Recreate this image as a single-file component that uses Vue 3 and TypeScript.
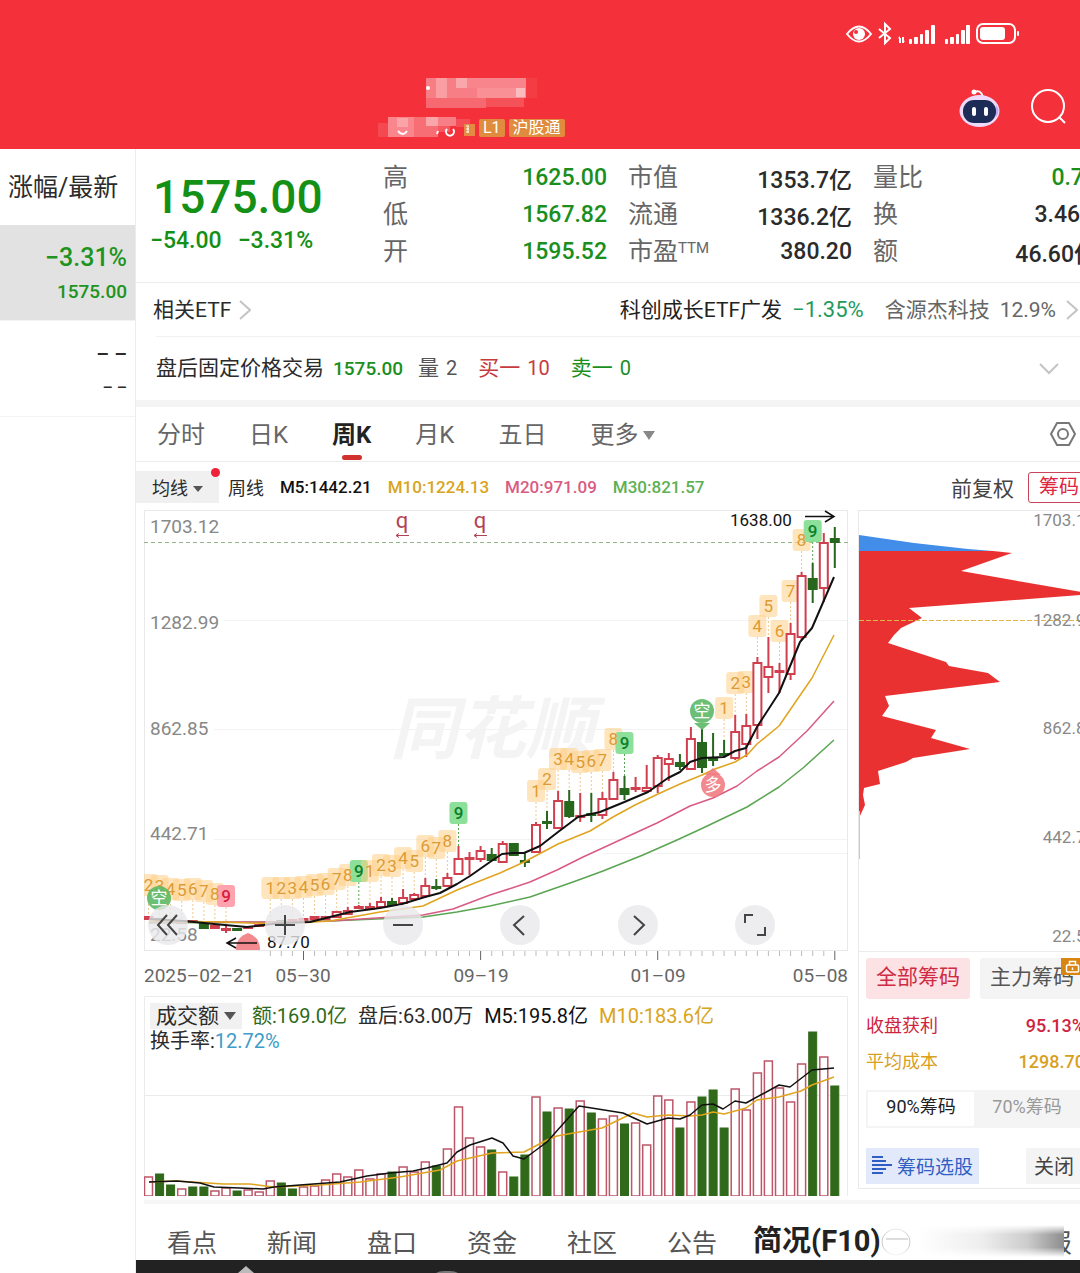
<script setup lang="ts">
type Candle = [up: 0 | 1, high: number, top: number, bottom: number, low: number]
type Tag = { i: number; y: number; text: string; kind: 'o' | 'g' | 'r' }

const step = 11.07
const cx = (i: number): number => Math.round((4.5 + step * i) * 10) / 10

const quotes = [
  [
    { label: '高', value: '1625.00', tone: 'green' },
    { label: '低', value: '1567.82', tone: 'green' },
    { label: '开', value: '1595.52', tone: 'green' },
  ],
  [
    { label: '市值', value: '1353.7亿', tone: '' },
    { label: '流通', value: '1336.2亿', tone: '' },
    { label: '市盈', sup: 'TTM', value: '380.20', tone: '' },
  ],
  [
    { label: '量比', value: '0.78', tone: 'green' },
    { label: '换', value: '3.46%', tone: '' },
    { label: '额', value: '46.60亿', tone: '' },
  ],
]

const periods = ['分时', '日K', '周K', '月K', '五日']
const sections = ['看点', '新闻', '盘口', '资金', '社区', '公告']

// Candles: vertical positions inside the 704 x 480 price plot
const candles: Candle[] = [
  [1, 407, 407, 409, 409], [0, 408, 409, 411, 411], [0, 409, 410, 412, 413], [1, 410, 411, 413, 414],
  [1, 410, 411, 412, 413], [0, 413, 413, 418, 418], [1, 416, 416, 418, 418], [1, 416, 419, 420, 423],
  [0, 418, 419, 420, 420], [1, 417, 417, 418, 418], [1, 414, 415, 416, 417], [1, 411, 412, 414, 415],
  [0, 410, 411, 413, 414], [1, 409, 410, 412, 413], [1, 408, 409, 411, 412], [1, 407, 407, 409, 409],
  [1, 407, 407, 409, 409], [1, 402, 402, 407, 407], [1, 397, 401, 404, 405], [1, 395, 397, 398, 399],
  [1, 393, 397, 399, 400], [1, 387, 392, 397, 397], [0, 388, 392, 395, 396], [1, 379, 388, 393, 394],
  [1, 383, 385, 389, 390], [1, 368, 376, 386, 388], [0, 369, 377, 378, 380], [1, 363, 368, 376, 377],
  [1, 336, 349, 364, 364], [1, 342, 348, 349, 365], [1, 336, 341, 349, 352], [0, 338, 345, 350, 350],
  [1, 331, 334, 352, 352], [0, 334, 334, 345, 345], [0, 343, 351, 352, 357], [1, 312, 315, 342, 342],
  [0, 301, 312, 313, 319], [1, 281, 291, 318, 318], [0, 280, 292, 306, 308], [1, 283, 306, 307, 312],
  [0, 283, 304, 305, 312], [1, 282, 289, 305, 309], [1, 262, 270, 289, 289], [0, 266, 279, 284, 290],
  [1, 267, 278, 279, 282], [1, 255, 278, 281, 281], [1, 245, 248, 276, 283], [1, 243, 249, 254, 271],
  [0, 244, 253, 256, 260], [1, 217, 229, 259, 259], [0, 219, 233, 257, 263], [0, 223, 249, 250, 256],
  [0, 230, 244, 245, 248], [1, 205, 222, 248, 250], [1, 204, 216, 234, 247], [1, 147, 153, 215, 229],
  [1, 127, 157, 167, 183], [1, 153, 161, 162, 183], [1, 113, 124, 164, 170], [1, 62, 66, 127, 130],
  [0, 53, 69, 79, 93], [1, 23, 33, 78, 92], [0, 17, 29, 32, 58],
]

// Turnover bar heights; rising weeks are negative and drawn hollow
const volumes = [
  -19, 22, 11, -7, 9, 9, -5, -8, 5, -6, -4, -15, 13, 7, -9, -10, -16, -22, -19, -26, -17, -22, 24, -29, -24,
  -34, 30, -47, -89, -58, -49, 46, -24, 19, 41, -99, 84, -88, 87, -95, 83, -77, -80, 72, -73, -51, -100, -96,
  68, -94, 99, 106, 68, -107, -86, -123, -135, -108, -94, -132, 164, -139, 110,
]

const series = (start: number, text: string, ys: number[], lastKind: 'o' | 'g' | 'r' = 'o'): Tag[] =>
  ys.map((y, n) => ({ i: start + n, y, text: text[n], kind: n === ys.length - 1 ? lastKind : 'o' }))

const tags: Tag[] = [
  ...series(0, '23456789', [375, 376, 379, 380, 379, 381, 384, 386], 'r'),
  ...series(11, '123456789', [378, 378, 378, 377, 375, 374, 369, 365, 361], 'g'),
  ...series(20, '123456789', [361, 355, 356, 348, 351, 336, 338, 331, 303], 'g'),
  ...series(35, '123456789', [281, 269, 249, 249, 252, 251, 250, 229, 233], 'g'),
  ...series(52, '123456789', [198, 173, 172, 116, 96, 121, 81, 30, 21], 'g'),
]

const labels = [
  { t: '1703.12', y: 16 }, { t: '1282.99', y: 112 }, { t: '862.85', y: 218 }, { t: '442.71', y: 323 }, { t: '22.58', y: 424 },
]
const chipLabels = [
  { t: '1703.12', y: 9 }, { t: '1282.99', y: 109 }, { t: '862.85', y: 217 }, { t: '442.71', y: 326 }, { t: '22.58', y: 425 },
]
const dates = [
  { t: '05–30', i: 14, anchor: 'middle', x: 159 },
  { t: '09–19', i: 30, anchor: 'middle', x: 337 },
  { t: '01–09', i: 46, anchor: 'middle', x: 514 },
  { t: '05–08', i: 62, anchor: 'end', x: 704 },
]
const ticks = Array.from({ length: 52 }, (_, n) => n + 11)
const isMajor = (i: number): boolean => dates.some((d) => d.i === i)

const tools = [
  { name: '更早', d: 'M19 10 L10 20 L19 30 M29 10 L20 20 L29 30' },
  { name: '放大', d: 'M20 10 V30 M10 20 H30' },
  { name: '缩小', d: 'M10 20 H30' },
  { name: '左移', d: 'M24 11 L14 20 L24 30' },
  { name: '右移', d: 'M16 11 L26 20 L16 30' },
  { name: '全屏', d: 'M10 18 V10 H18 M30 22 V30 H22' },
]

// Masked stock name and code: [x, y, w, h, opacity]
const nameBlocks = [
  [0, 0, 100, 20, 0.38], [10, 0, 11, 20, 0.25], [30, 0, 11, 10, 0.32], [41, 0, 59, 10, 0.06], [51, 10, 49, 10, 0.14],
  [90, 10, 9, 9, 0.4], [0, 20, 60, 10, 0.28], [60, 20, 38, 9, 0.16], [100, 0, 11, 20, 0.06],
]
const codeBlocks = [
  [0, 6, 10, 14, 0.12], [10, 0, 26, 20, 0.42], [19, 1, 11, 9, 0.25], [36, 0, 24, 20, 0.3], [48, 0, 30, 9, 0.38], [60, 9, 12, 6, 0.2], [78, 2, 14, 8, 0.14],
]
</script>

<template>
  <div class="app">
    <header class="top">
      <div class="status">
        <svg width="176" height="26" viewBox="0 0 176 26" aria-hidden="true">
          <g fill="none" stroke="#fff" stroke-width="2">
            <path d="M2 13 Q14 -2 26 13 Q14 28 2 13Z" />
            <path d="M34 8 L45 17 L40 22 V3 L45 8 L34 17" stroke-width="2" />
            <rect x="132" y="3" width="38" height="19" rx="6" />
          </g>
          <circle cx="14" cy="13" r="6" fill="#fff" />
          <circle cx="11" cy="11" r="2" fill="#f4303a" />
          <g fill="#fff">
            <path d="M54 17h2v5h-2zM57 16h2v6h-2zM53 17l2-2v3zM60 20l-2 2v-3z" />
            <rect x="64" y="18" width="3" height="5" rx="1" /><rect x="69" y="16" width="4" height="7" rx="1" />
            <rect x="75" y="13" width="3" height="10" rx="1" /><rect x="80" y="9" width="4" height="14" rx="1" />
            <rect x="86" y="4" width="4" height="19" rx="1" />
            <rect x="100" y="18" width="3" height="5" rx="1" /><rect x="105" y="16" width="4" height="7" rx="1" />
            <rect x="111" y="13" width="3" height="10" rx="1" /><rect x="116" y="9" width="4" height="14" rx="1" />
            <rect x="121" y="4" width="4" height="19" rx="1" />
            <rect x="135" y="6" width="25" height="13" rx="3" /><rect x="172" y="10" width="2" height="5" rx="1" />
          </g>
        </svg>
      </div>
      <div class="title-row">
        <div class="stock">
          <svg class="name" width="112" height="30" viewBox="0 0 112 30" aria-hidden="true">
            <rect v-for="(b, n) in nameBlocks" :key="n" :x="b[0]" :y="b[1]" :width="b[2]" :height="b[3]" :opacity="b[4]" fill="#fff" />
            <circle cx="2" cy="10" r="2" fill="#fff" />
          </svg>
          <div class="code">
            <svg width="97" height="22" viewBox="0 0 97 22" aria-hidden="true">
              <rect v-for="(b, n) in codeBlocks" :key="n" :x="b[0]" :y="b[1]" :width="b[2]" :height="b[3]" :opacity="b[4]" fill="#fff" />
              <path d="M20 14 q5 6 9 0 M60 14 l-1 3 M69 12 a4 4 0 1 0 6 0" fill="none" stroke="#fff" stroke-width="2" />
              <rect x="86" y="7" width="11" height="12" fill="#e58a42" />
              <path d="M88 9h3M88 12h3M88 15h3M90 9v7" stroke="#fff" stroke-width="1" />
            </svg>
            <span class="badge">L1</span>
            <span class="badge">沪股通</span>
          </div>
        </div>
        <div class="actions">
          <button type="button" aria-label="智能助手">
            <svg width="42" height="42" viewBox="0 0 42 42">
              <path d="M15 4 q7 -3 9 5" fill="none" stroke="#fff" stroke-width="2" />
              <circle cx="15" cy="4" r="2.500" fill="#fff" />
              <ellipse cx="20.500" cy="23" rx="20" ry="16" fill="#efd9fa" />
              <path d="M37 17 q5 6 0 12z" fill="#c4a8ee" />
              <rect x="4" y="12" width="33" height="23" rx="11" fill="#1d2b57" />
              <rect x="13" y="19" width="4" height="9" rx="2" fill="#fff" /><rect x="25" y="19" width="4" height="9" rx="2" fill="#fff" />
            </svg>
          </button>
          <button type="button" aria-label="搜索">
            <svg width="38" height="38" viewBox="0 0 38 38" fill="none" stroke="#fff" stroke-width="2">
              <circle cx="18" cy="18" r="16" /><path d="M29 29 L35 35" />
            </svg>
          </button>
        </div>
      </div>
    </header>

    <div class="body">
      <aside class="side">
        <div class="side-head">涨幅/最新</div>
        <div class="side-item selected"><b>−3.31%</b><span>1575.00</span></div>
        <div class="side-item empty"><b>– –</b><span>– –</span></div>
      </aside>

      <main class="main">
        <section class="quote">
          <div class="price">
            <strong>1575.00</strong>
            <p><span>−54.00</span><span>−3.31%</span></p>
          </div>
          <div class="stats">
            <dl v-for="(col, n) in quotes" :key="n">
              <div v-for="q in col" :key="q.label">
                <dt>{{ q.label }}<sup v-if="'sup' in q">{{ q.sup }}</sup></dt>
                <dd :class="q.tone">{{ q.value }}</dd>
              </div>
            </dl>
          </div>
        </section>

        <section class="etf">
          <a href="#etf">相关ETF
            <svg width="12" height="20" viewBox="0 0 12 20"><path d="M1 1 L11 10 L1 19" /></svg>
          </a>
          <a href="#fund" class="fund">
            <b>科创成长ETF广发</b><i>−1.35%</i><span class="hold">含源杰科技</span><span>12.9%</span>
            <svg width="12" height="20" viewBox="0 0 12 20"><path d="M1 1 L11 10 L1 19" /></svg>
          </a>
        </section>

        <section class="after">
          <span>盘后固定价格交易</span><b class="green">1575.00</b>
          <span class="pair grey">量 <b>2</b></span>
          <span class="pair red">买一 <b>10</b></span>
          <span class="pair green">卖一 <b>0</b></span>
          <button type="button" aria-label="展开"><svg width="20" height="12" viewBox="0 0 20 12"><path d="M1 1 L10 10 L19 1" /></svg></button>
        </section>

        <nav class="periods">
          <button v-for="p in periods" :key="p" type="button" :class="{ on: p === '周K' }">{{ p }}</button>
          <button type="button">更多<i class="caret"></i></button>
          <button type="button" class="gear" aria-label="设置">
            <svg width="28" height="26" viewBox="0 0 28 26" fill="none" stroke="#777" stroke-width="2">
              <path d="M8 2 H20 L26 13 L20 24 H8 L2 13Z" stroke-linejoin="round" /><circle cx="14" cy="13" r="5" />
            </svg>
          </button>
        </nav>

        <div class="legend">
          <button type="button" class="ma">均线<i class="caret"></i></button>
          <span class="week">周线</span>
          <span class="m5">M5:1442.21</span><span class="m10">M10:1224.13</span>
          <span class="m20">M20:971.09</span><span class="m30">M30:821.57</span>
          <button type="button" class="adjust">前复权</button>
          <button type="button" class="chip-btn">筹码</button>
        </div>

        <div class="charts">
          <div class="left">
            <div class="price-chart">
              <svg class="plot" viewBox="0 0 704 480">
                <text class="mark" x="246" y="243">同花顺</text>
                <g stroke="#f3f3f3">
                  <path d="M80 110.500 H704 M70 219.500 H704 M70 329.500 H704 M460 343.500 H704" />
                </g>
                <path d="M.5 440 V.5 H703.500 V440" fill="none" stroke="#e9e9e9" />
                <path d="M0 440.500 H704" stroke="#e9e9e9" />
                <path d="M0 32.500 H704" stroke="#94b48c" stroke-dasharray="4 3" />
                <text v-for="l in labels" :key="l.t" class="axis" x="6" :y="l.y + 7">{{ l.t }}</text>

                <g v-for="(t, n) in tags" :key="'s' + n">
                  <path :d="`M${cx(t.i)} ${t.y + 11} V${candles[t.i][1]}`" :class="['stem', t.kind]" />
                  <rect :x="cx(t.i) - 9" :y="t.y - 11" width="18" height="22" rx="3" :class="['tag', t.kind]" />
                </g>
                <text v-for="(t, n) in tags" :key="'t' + n" :x="cx(t.i)" :y="t.y + 6" :class="['digit', t.kind]">{{ t.text }}</text>

                <g v-for="(c, i) in candles" :key="'c' + i" :class="c[0] ? 'up' : 'down'">
                  <path :d="`M${cx(i)} ${c[1]} V${c[2]} M${cx(i)} ${c[3]} V${c[4]}`" />
                  <rect :x="cx(i) - 4" :y="c[2]" width="8" :height="c[3] - c[2]" />
                </g>

                <g class="lines">
                  <path stroke="#5aa552" d="M5 413 L136 412 L186 411 L279 407 L313 402 L346 396 L386 387 L429 372 L459 361 L499 345 L533 330 L559 318 L603 297 L635 277 L659 258 L690 230" />
                  <path stroke="#d95b83" d="M5 412 L136 412 L186 411 L279 405 L309 399 L346 385 L368 378 L386 372 L413 360 L439 347 L463 336 L489 324 L513 313 L546 296 L569 288 L593 276 L613 261 L635 247 L663 221 L690 191" />
                  <path stroke="#e0a41e" d="M5 411 L80 412 L136 414 L186 411 L236 402 L279 396 L313 380 L356 363 L380 352 L414 334 L446 321 L469 307 L491 295 L514 284 L536 274 L558 265 L571 259 L591 252 L604 244 L613 234 L635 216 L668 168 L690 125" />
                  <path stroke="#111" class="thick" d="M5 409 L40 411 L70 414 L103 417 L136 413 L166 412 L186 407 L206 402 L236 398 L258 394 L281 387 L296 383 L313 374 L326 366 L346 352 L358 344 L369 343 L380 343 L396 336 L414 322 L434 307 L456 302 L478 293 L504 282 L524 268 L536 262 L546 252 L558 248 L580 247 L591 241 L602 238 L613 217 L635 183 L656 132 L668 118 L690 67" />
                </g>

                <g class="pin green-pin">
                  <path d="M550 213 l8 7 l8 -7z" /><circle cx="558" cy="201" r="12" /><text x="558" y="207">空</text>
                  <circle cx="15" cy="388" r="12" /><text x="15" y="394">空</text>
                </g>
                <g class="pin red-pin">
                  <path d="M561 265 l8 -7 l8 7z" /><circle cx="569" cy="275" r="12" /><text x="569" y="281">多</text>
                  <path d="M92 440 Q92 427 104 423 Q116 427 116 440Z" />
                </g>

                <g v-for="x in [258, 336]" :key="x">
                  <text class="q" :x="x" y="18">q</text>
                  <path :d="`M${x + 7} 25.500 H${x - 6} m3 -2 l-3 2 l3 2`" fill="none" stroke="#b24256" />
                </g>
                <text class="peak" x="586" y="16">1638.00</text>
                <path d="M661 6.500 H690 M681 1 L690 6.500 L681 12" fill="none" stroke="#111" stroke-width="1.500" />
                <text class="peak" x="123" y="438">87.70</text>
                <path d="M113 433 H83 M92 428 L83 433 L92 438" fill="none" stroke="#111" stroke-width="1.500" />

                <path v-for="i in ticks" :key="'k' + i" :d="`M${cx(i)} 441 v${isMajor(i) ? 9 : 5}`" :stroke="isMajor(i) ? '#666' : '#bbb'" />
                <text class="date" x="0" y="472">2025–02–21</text>
                <text v-for="d in dates" :key="d.t" class="date" :x="d.x" y="472" :text-anchor="d.anchor">{{ d.t }}</text>
              </svg>
              <div class="tools">
                <button v-for="t in tools" :key="t.name" type="button" :aria-label="t.name">
                  <svg width="40" height="40" viewBox="0 0 40 40"><path :d="t.d" /></svg>
                </button>
              </div>
            </div>

            <div class="volume">
              <svg class="plot" viewBox="0 0 704 200">
                <path d="M.5 200 V.5 H703.500 V200 M0 99.500 H704" fill="none" stroke="#ebebeb" />
                <g v-for="(v, i) in volumes" :key="i" :class="v < 0 ? 'vol-up' : 'vol-down'">
                  <rect :x="cx(i) - 4" :y="200 - Math.abs(v)" width="8" :height="Math.abs(v)" />
                </g>
                <g class="lines">
                  <path stroke="#e0a41e" d="M5 186 L33 185 L79 188 L106 188 L129 191 L176 189 L216 186 L256 181 L296 174 L313 165 L348 157 L380 156 L403 144 L413 140 L435 136 L458 132 L489 117 L503 121 L524 119 L546 120 L558 119 L569 116 L580 118 L602 112 L613 104 L635 101 L657 95 L668 89 L690 81" />
                  <path stroke="#111" d="M5 186 L33 185 L56 187 L70 191 L96 192 L119 193 L130 191 L156 189 L196 186 L223 180 L246 177 L269 175 L283 172 L303 167 L313 156 L326 149 L348 142 L359 147 L369 160 L380 163 L403 146 L435 110 L479 117 L503 128 L524 122 L536 123 L546 119 L558 109 L569 108 L579 113 L591 105 L602 107 L635 89 L646 91 L668 74 L690 72" />
                </g>
              </svg>
              <div class="vol-head">
                <div class="vol-line">
                  <button type="button">成交额<i class="caret"></i></button>
                  <span class="amount">额:169.0亿</span><span>盘后:63.00万</span>
                  <span class="m5">M5:195.8亿</span><span class="m10">M10:183.6亿</span>
                </div>
                <div class="turnover">换手率:<span>12.72%</span></div>
              </div>
            </div>
          </div>

          <aside class="chips">
            <svg class="chip-plot" viewBox="0 0 222 440" width="222" height="440">
              <path d="M0 24 L55 32 L109 38 L134 40 V41 H0Z" fill="#428de8" />
              <path d="M0 40 H134 L153 42 L102 60 L142 67 L222 81 V84 L50 97 L63 107 L42 117 L35 124 L29 132 L87 151 L90 155 L129 162 L141 171 L26 185 L30 195 L23 205 L77 219 L72 227 L111 238 L54 247 L47 251 L19 260 L21 273 L5 277 L4 284 L6 294 L0 307Z" fill="#e93131" />
              <path d="M.5 300 V348" stroke="#f2b5b5" />
              <path d="M0 109.500 H222" stroke="#dfb54c" stroke-dasharray="5 2" />
              <text v-for="l in chipLabels" :key="l.t" x="236" :y="l.y + 6">{{ l.t }}</text>
            </svg>
            <div class="chip-panel">
              <div class="kinds">
                <button type="button" class="all">全部筹码</button>
                <button type="button" class="major">主力筹码
                  <svg class="lock" width="20" height="17" viewBox="0 0 20 17"><rect width="20" height="17" fill="#d98511" /><g fill="none" stroke="#fff" stroke-width="1.500"><rect x="5.500" y="7" width="12" height="7" rx="1" /><path d="M8.500 7 V3.500 H14.500 V7 M11.500 9.500 V12" /></g></svg>
                </button>
              </div>
              <p class="row profit"><span>收盘获利</span><b>95.13%</b></p>
              <p class="row cost"><span>平均成本</span><b>1298.70</b></p>
              <div class="seg">
                <button type="button" class="on">90%筹码</button><button type="button">70%筹码</button>
              </div>
              <div class="foot">
                <button type="button" class="pick">
                  <svg width="20" height="20" viewBox="0 0 20 20" stroke="#2f5fc4" stroke-width="2"><path d="M0 2 H11 M0 6 H14 M0 10 H20 M0 14 H14 M0 18 H11" /></svg>筹码选股
                </button>
                <button type="button" class="close">关闭</button>
              </div>
            </div>
          </aside>
        </div>

        <nav class="sections">
          <a v-for="s in sections" :key="s" href="#section">{{ s }}</a>
          <a href="#f10" class="current">简况(F10)</a>
          <span class="haze"><svg width="34" height="32" viewBox="0 0 34 32"><ellipse cx="15" cy="17" rx="14" ry="13" fill="#fff" stroke="#ccc" /><path d="M5 14 H27" stroke="#ddd" stroke-width="2" /></svg></span>
          <a href="#report" class="report">报</a>
        </nav>
        <div class="dock">
          <svg width="340" height="13" viewBox="0 0 340 13"><path d="M102 13 L110 6 L118 13Z" fill="#bbb" /><path d="M300 13 q3 -2 8 -2 h6 q5 0 8 2z" fill="#777" /></svg>
        </div>
      </main>
    </div>
  </div>
</template>

<style>
body { background: #fff; overflow-x: hidden; }
</style>

<style scoped>
.app { font-family: Roboto, "Noto Sans CJK SC", sans-serif; color: #2b2b2b; overflow: hidden; }
.app * { box-sizing: border-box; }
button { font: inherit; color: inherit; border: 0; background: none; padding: 0; white-space: nowrap; }
a { color: inherit; text-decoration: none; }
p, dl, dd { margin: 0; }
b, i { font-weight: 500; font-style: normal; }
svg { display: block; }

.top { background: #f4303a; height: 149px; }
.status { display: flex; justify-content: flex-end; padding: 21px 59px 0 0; }
.title-row { display: flex; justify-content: space-between; margin-top: 31px; }
.stock { margin-left: 35%; }
.name { margin-left: 48px; }
.code { display: flex; gap: 4px; align-items: center; margin-top: 9px; height: 22px; }
.badge { background: #e08c3e; color: #fff; font-size: 16px; line-height: 18px; padding: 0 4px; border-radius: 2px; }
.actions { display: flex; gap: 29px; padding: 10px 12px 0 0; align-items: flex-start; }

.body { display: flex; align-items: stretch; }
.side { flex: 0 0 136px; border-right: 1px solid #ececec; }
.side-head { height: 76px; padding: 21px 0 0 8px; font-size: 25px; line-height: 36px; white-space: nowrap; }
.side-item { height: 96px; padding: 15px 8px 0 0; display: flex; flex-direction: column; align-items: flex-end; border-bottom: 1px solid #f3f3f3; }
.side-item b { font-size: 25px; line-height: 36px; }
.side-item span { font-size: 19px; line-height: 32px; font-weight: 500; }
.side-item.empty b { font-size: 20px; }
.side-item.empty span { font-size: 16px; }
.selected { background: #e2e2e2; color: #1e9420; }

.main { flex: 1; min-width: 0; }
.green { color: #1a8f1e; }
.red { color: #c63a40; }
.grey { color: #555; }

.quote { display: flex; height: 134px; border-bottom: 1px solid #ececec; }
.price { flex: 0 0 247px; padding: 18px 0 0 17px; color: #149016; }
.price strong { display: block; font-size: 46px; line-height: 60px; font-weight: 500; }
.price p { display: flex; gap: 16px; margin-left: -3px; font-size: 23px; line-height: 28px; font-weight: 500; }
.stats { flex: 1; display: grid; grid-template-columns: repeat(3, 1fr); gap: 21px; margin-right: -17px; padding-top: 10px; }
.stats div { display: flex; justify-content: space-between; align-items: center; height: 37px; }
dt { font-size: 25px; color: #666; white-space: nowrap; padding-bottom: 6px; }
sup { font-size: 15px; line-height: 15px; vertical-align: 7px; }
dd { font-size: 23px; font-weight: 500; white-space: nowrap; }

.etf { display: flex; justify-content: space-between; align-items: center; height: 53px; padding: 0 2px 0 17px; font-size: 21px; line-height: 30px; }
.etf a { display: flex; align-items: baseline; gap: 8px; white-space: nowrap; }
.etf a svg { align-self: center; }
.etf path, .after path { fill: none; stroke: #c4c4c4; stroke-width: 2; }
.fund b, .fund i, .fund span { font-weight: 400; }
.etf .fund { gap: 10px; color: #666; }
.fund b { color: #222; }
.fund i { color: #239a5b; font-size: 22px; }
.hold { margin-left: 11px; }
.after { display: flex; align-items: baseline; gap: 9px; height: 64px; margin-left: 20px; padding: 16px 21px 0 0; font-size: 21px; line-height: 30px; border-top: 1px solid #f1f1f1; }
.after b { font-size: 20px; font-weight: 400; }
.after b.green { font-weight: 500; font-size: 19px; }
.pair { margin-left: 6px; display: flex; gap: 7px; align-items: baseline; }
.pair.red, .pair.green { margin-left: 12px; }
.after button { margin-left: auto; }

.periods { display: flex; align-items: center; gap: 44px; height: 62px; padding: 0 3px 4px 21px; border-top: 7px solid #f4f4f4; border-bottom: 1px solid #ececec; font-size: 24px; color: #666; }
.periods button { position: relative; }
.periods .on { color: #222; font-weight: 700; }
.periods .on::after { content: ""; position: absolute; left: 50%; bottom: -10px; width: 20px; height: 5px; margin-left: -10px; border-radius: 3px; background: #d0312d; }
.periods .gear { margin-left: auto; padding-top: 3px; }
.caret { display: inline-block; margin-left: 5px; border: 6px solid transparent; border-top: 9px solid #888; border-bottom: 0; vertical-align: 3px; }

.legend { display: flex; align-items: center; height: 48px; font-size: 17px; padding-top: 2px; }
.ma { position: relative; background: #f0f0f0; height: 32px; width: 83px; font-size: 18px; }
.ma .caret { border-width: 6px 5px 0; border-top-color: #555; }
.ma::after { content: ""; position: absolute; right: -1px; top: -3px; width: 9px; height: 9px; border-radius: 50%; background: #ee2238; }
.week { font-size: 18px; margin-left: 9px; }
.m5 { color: #111; }
.m10 { color: #d9a420; }
.m20 { color: #d95b83; }
.m30 { color: #5db052; }
.legend .m5, .legend .m10, .legend .m20, .legend .m30 { margin-left: 16px; font-weight: 500; }
.adjust { margin-left: auto; font-size: 21px; color: #444; }
.chip-btn { margin: 0 -6px 0 14px; width: 58px; height: 31px; border: 1px solid #c9465a; border-radius: 3px; font-size: 20px; line-height: 26px; color: #dc2740; text-align: left; padding-left: 10px; }

.charts { display: flex; gap: 10px; margin-left: 8px; border-bottom: 4px solid #f6f6f6; padding-bottom: 4px; }
.left { flex: 1; min-width: 0; }
.price-chart { position: relative; }
.plot { width: 100%; height: auto; }
.axis { font-size: 19px; fill: #888; }
.mark { font-size: 68px; font-weight: 700; font-style: italic; fill: #f4f4f4; }
.stem { stroke: #efc98d; stroke-dasharray: 2 2; }
.stem.g { stroke: #5aa552; }
.tag.o { fill: #ffcf87; opacity: 0.55; }
.tag.g { fill: #8de09a; }
.tag.r { fill: #ffa3ae; }
.digit { font-size: 17px; text-anchor: middle; fill: #dc9b34; }
.digit.g { fill: #0b7f2b; font-weight: 500; }
.digit.r { fill: #d1213f; font-weight: 500; }
.up path, .up rect { stroke: #cf3f4d; stroke-width: 2; }
.up rect { fill: #fff; }
.down path, .down rect { stroke: #27661d; stroke-width: 2; }
.down rect { fill: #27661d; }
.vol-up rect { fill: #fff; stroke: #bd5668; stroke-width: 1.5; }
.vol-down rect { fill: #31691a; stroke: #31691a; }
.lines path { fill: none; stroke-width: 1.5; stroke-linejoin: round; }
.lines .thick { stroke-width: 2; }
.pin { font-size: 17px; text-anchor: middle; }
.pin text { fill: #fff; }
.green-pin path, .green-pin circle { fill: #5cb865; opacity: 0.9; }
.red-pin path, .red-pin circle { fill: #f07c82; opacity: 0.9; }
.q { font-size: 22px; text-anchor: middle; fill: #b24256; }
.peak { font-size: 17px; fill: #111; }
.date { font-size: 19px; fill: #666; }
.tools { position: absolute; left: 4px; right: 73px; bottom: 45px; display: flex; justify-content: space-between; }
.tools button { width: 40px; height: 40px; border-radius: 50%; background: rgba(232, 232, 235, 0.8); }
.tools path { fill: none; stroke: #444; stroke-width: 2; }

.volume { display: grid; margin-top: 6px; }
.volume > * { grid-area: 1 / 1; }
.vol-head { padding: 7px 0 0 6px; font-size: 20px; line-height: 24px; white-space: nowrap; }
.vol-line { display: flex; gap: 11px; align-items: center; }
.vol-line button { background: #f1f1f1; width: 92px; height: 26px; font-size: 21px; line-height: 26px; }
.vol-line .caret { border-top-width: 8px; border-top-color: #555; }
.vol-line .amount { margin-left: -1px; color: #2f6a1a; }
.turnover span { color: #3d9cc8; }

.chips { flex: 0 0 222px; min-width: 0; border: 1px solid #e9e9e9; border-right: 0; overflow: hidden; height: 679px; }
.chip-plot { overflow: hidden; }
.chip-plot text { font-size: 17px; fill: #888; text-anchor: end; }
.chip-panel { padding: 6px 0 0 7px; border-top: 1px solid #ececec; margin-right: -8px; }
.kinds { display: flex; gap: 10px; font-size: 21px; line-height: 36px; }
.kinds button { height: 41px; flex: 0 0 104px; border-radius: 3px; padding-bottom: 4px; }
.kinds .all { background: #fde2e5; color: #cf2b44; }
.kinds .major { position: relative; flex: 1; background: #f4f4f4; color: #555; text-align: left; padding-left: 10px; }
.lock { position: absolute; right: 7px; top: 0; }
.row { display: flex; justify-content: space-between; font-size: 18px; line-height: 36px; padding-right: 3px; }
.kinds + .row { margin-top: 9px; }
.profit { color: #d0233f; }
.cost { color: #d9a01d; }
.seg { display: flex; margin-top: 10px; background: #f4f4f4; height: 38px; padding: 2px; font-size: 18px; line-height: 30px; }
.seg button { flex: 0 0 106px; color: #999; padding-bottom: 4px; }
.seg .on { background: #fff; color: #222; }
.foot { display: flex; justify-content: space-between; margin-top: 20px; height: 36px; }
.pick { display: flex; align-items: center; gap: 5px; width: 113px; padding: 0 0 2px 6px; background: #e1e9fb; color: #2f5fc4; font-size: 19px; }
.close { width: 62px; background: #f4f4f4; font-size: 20px; color: #444; text-align: left; padding: 0 0 2px 8px; }

.sections { display: flex; align-items: center; height: 56px; padding: 18px 8px 0 31px; gap: 50px; font-size: 25px; color: #555; white-space: nowrap; }
.sections .current { margin-left: -14px; font-size: 29px; line-height: 36px; font-weight: 700; color: #222; }
.haze { flex: 1; height: 32px; margin: 0 -50px; background: linear-gradient(90deg, #fff 20%, #eee 55%, #ccc 80%, #8d8d8d); -webkit-mask-image: linear-gradient(transparent, #000 30%, #000 70%, transparent); mask-image: linear-gradient(transparent, #000 30%, #000 70%, transparent); }
.sections .report { width: 8px; direction: rtl; overflow: hidden; }
.dock { height: 13px; background: #222; }
</style>
